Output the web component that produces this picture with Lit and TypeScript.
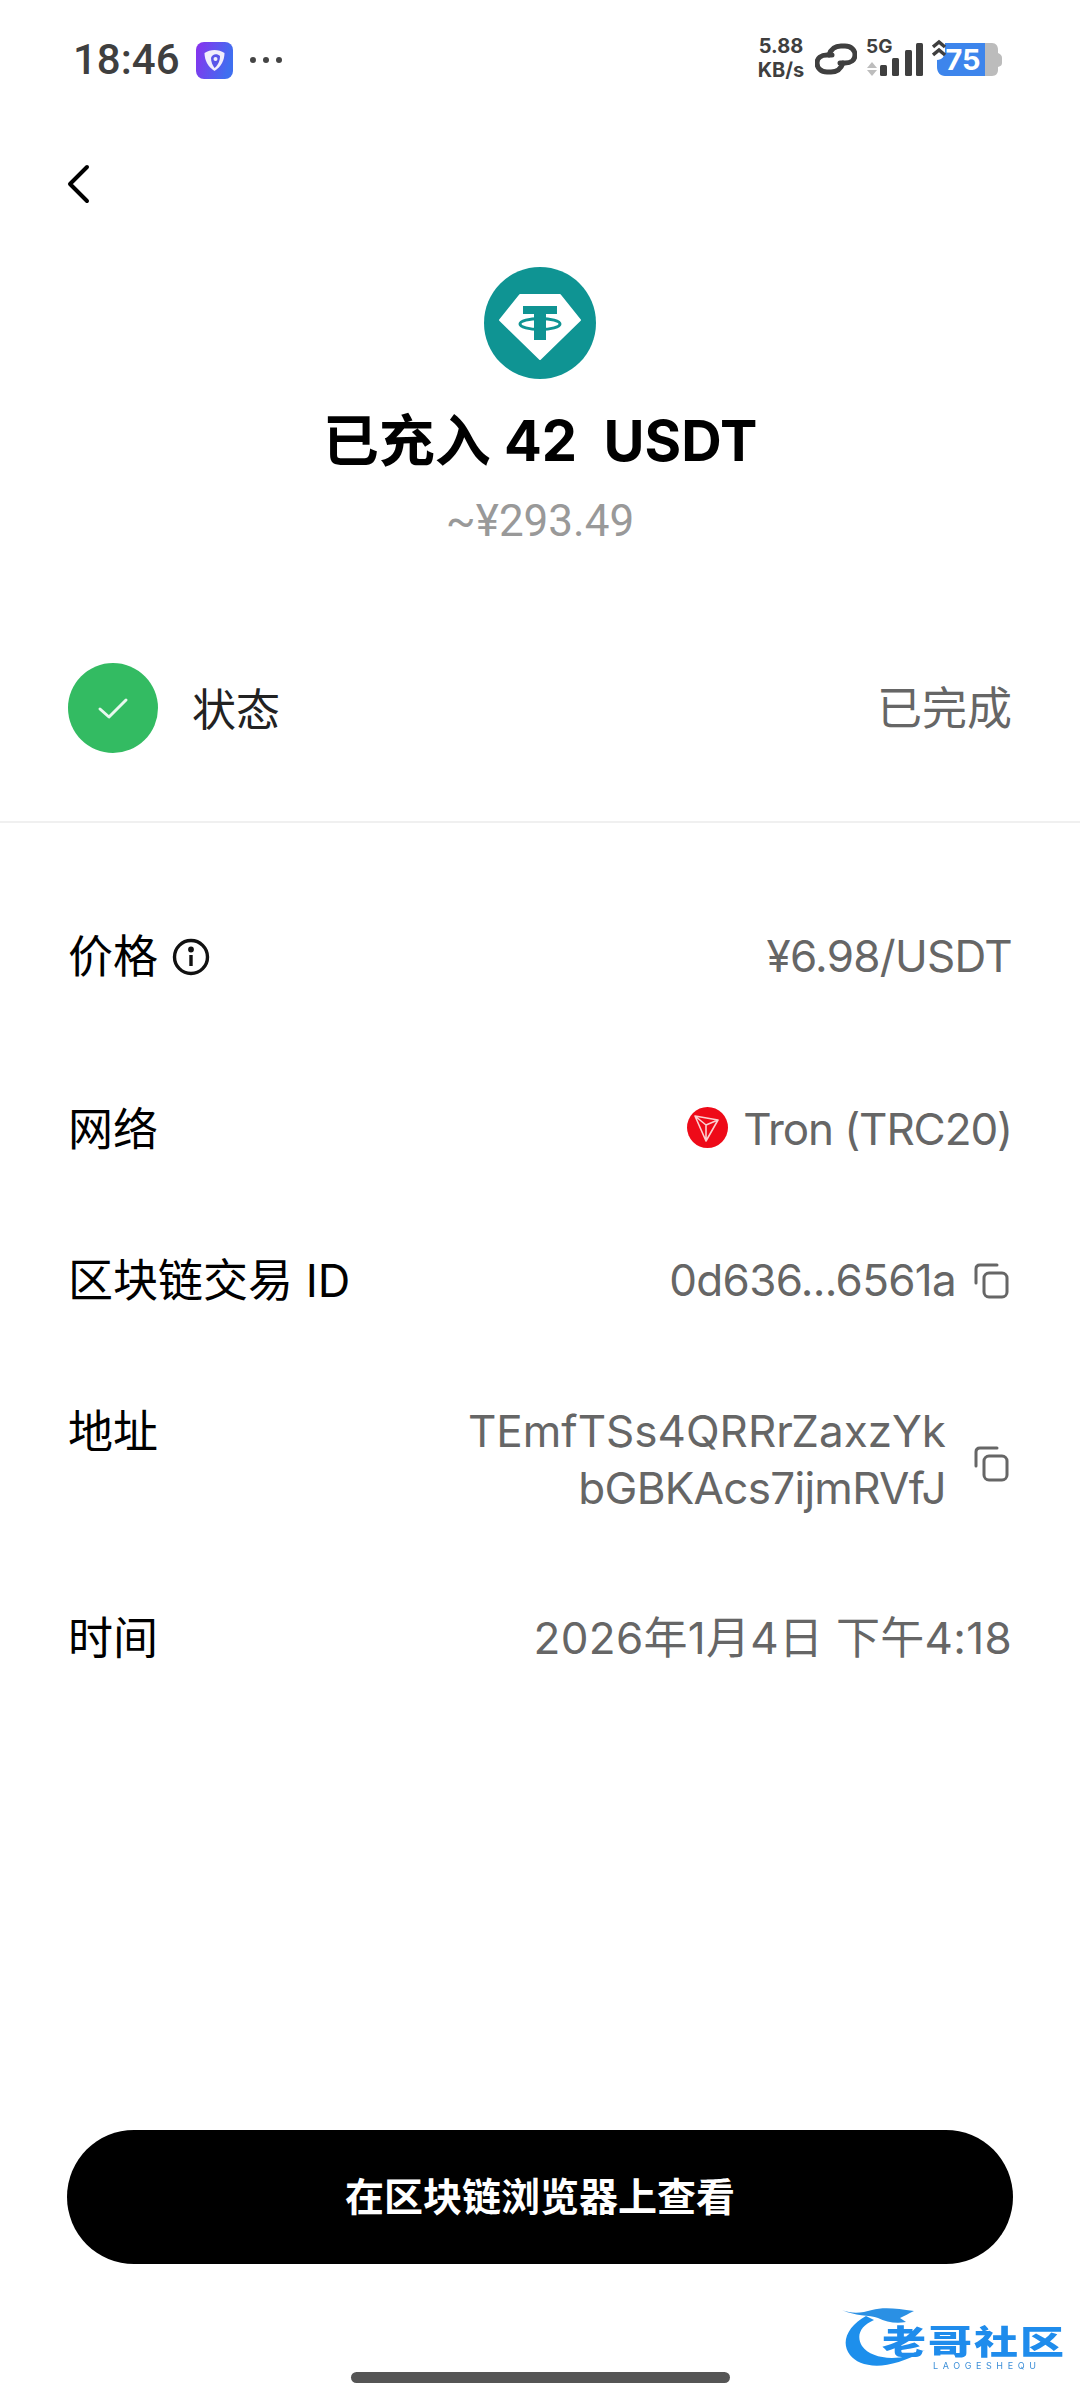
import { LitElement, css, html } from 'lit';
import { customElement } from 'lit/decorators.js';

@customElement('app-root')
export class AppRoot extends LitElement {
  static styles = css`
    :host {
      display: block;
      position: relative;
      width: 1080px;
      height: 2400px;
      background: #fff;
      overflow: hidden;
      font-family: "Inter", "Noto Sans CJK SC", sans-serif;
      color: #000;
    }

    .status {
      height: 120px;
      display: flex;
      align-items: center;
      justify-content: space-between;
      padding: 0 78px 0 73px;
      box-sizing: border-box;
    }
    .status-left, .status-right { display: flex; align-items: center; }
    .clock { font: 500 42px/1 "Roboto", sans-serif; color: #3f3f3f; }
    .app-icon { margin-left: 16px; width: 37px; height: 37px; }
    .dots { margin-left: 16px; width: 34px; height: 8px; }
    .speed {
      font: 700 20px/24px "Inter", sans-serif;
      color: #3f3f3f;
      text-align: center;
      width: 48px;
      margin-top: -4px;
    }
    .link { margin-left: 10px; width: 42px; height: 46px; }
    .signal { margin-left: 9px; width: 58px; height: 54px; }
    .battery { margin-left: 8px; width: 70px; height: 46px; }

    .nav { height: 97px; padding-left: 67px; display: flex; align-items: flex-start; }
    .back { margin-top: 44px; width: 24px; height: 40px; }

    .head { display: flex; flex-direction: column; align-items: center; }
    .token { width: 112px; height: 112px; margin-top: 50px; }
    .title {
      margin-top: 28px;
      font-size: 56px;
      line-height: 68px;
      font-weight: 700;
      white-space: pre;
    }
    .fiat { margin-top: 20px; font: 400 44px/52px "Roboto", sans-serif; color: #999; }

    .state {
      margin-top: 116px;
      height: 90px;
      padding: 0 68px;
      display: flex;
      align-items: center;
    }
    .check { width: 90px; height: 90px; }
    .state-label { margin-left: 34px; margin-top: -2px; font-size: 44px; color: #222; flex: 1; }
    .value { font-size: 44px; line-height: 57px; color: #666; white-space: nowrap; }
    .state .value { font-size: 45px; }
    .divider { margin-top: 68px; height: 2px; background: #f0f0f0; }

    .rows {
      padding: 105px 68px 0 68px;
      display: flex;
      flex-direction: column;
    }
    .row { display: flex; justify-content: space-between; align-items: flex-start; }
    .label {
      font-size: 45px;
      line-height: 57px;
      color: #000;
      display: flex;
      align-items: center;
    }
    .right { display: flex; align-items: center; }
    .info { margin-left: 14px; width: 38px; height: 38px; }
    .tron { width: 41px; height: 41px; margin-right: 15px; margin-top: -4px; }
    .copy { margin-left: 18px; margin-right: 2px; width: 36px; height: 38px; display: block; }
    .address { text-align: right; }
    .addr-copy { margin-left: 10px; margin-top: 8px; }
    .tight { letter-spacing: -0.7px; }
    .tighter { letter-spacing: -1.1px; }
    .gap-116 { margin-top: 116px; }
    .gap-94 { margin-top: 94px; }
    .gap-time { margin-top: 93px; }
    .date { letter-spacing: 0.3px; }

    .cta {
      position: absolute;
      left: 67px;
      top: 2130px;
      width: 946px;
      height: 134px;
      padding-bottom: 6px;
      box-sizing: border-box;
      border-radius: 67px;
      background: #000;
      color: #fff;
      display: flex;
      align-items: center;
      justify-content: center;
      font-size: 39px;
      font-weight: 700;
    }
    .home {
      position: absolute;
      left: 351px;
      top: 2372px;
      width: 379px;
      height: 11px;
      border-radius: 6px;
      background: #555;
    }

    .mark { position: absolute; left: 838px; top: 2300px; width: 232px; height: 84px; filter: blur(0.7px); }
    .mark svg { position: absolute; left: 0; top: 0; width: 120px; height: 84px; }
    .mark-cn {
      position: absolute;
      left: 44px;
      top: 23px;
      font-size: 44px;
      line-height: 38px;
      font-weight: 900;
      letter-spacing: 2px;
      white-space: pre;
      transform: scaleY(0.76);
      color: #1f8cec;
    }
    .mark-en {
      position: absolute;
      left: 95px;
      top: 60px;
      font-size: 9px;
      line-height: 11px;
      letter-spacing: 4.6px;
      color: #3d8fd8;
    }
  `;

  render() {
    return html`
      <div class="status">
        <div class="status-left">
          <span class="clock">18:46</span>
          <svg class="app-icon" viewBox="0 0 37 37">
            <defs>
              <linearGradient id="ai" x1="0" y1="0" x2="1" y2="0.3">
                <stop offset="0" stop-color="#8a30ee" />
                <stop offset="1" stop-color="#3f6ff0" />
              </linearGradient>
            </defs>
            <rect width="37" height="37" rx="8" fill="url(#ai)" />
            <path d="M18.500 8 C22 8 25.500 9 28.500 11 C28.500 18 25 25 18.500 29 C12 25 8.500 18 8.500 11 C11.500 9 15 8 18.500 8Z" fill="#f2eefc" />
            <path d="M15 16 C16 12 21 11 24 14 C24 20 21 24 18.500 26 C16.500 23 15 20 15 16Z" fill="#5a55e8" />
            <circle cx="19.500" cy="17" r="2" fill="#f2eefc" />
          </svg>
          <svg class="dots" viewBox="0 0 34 8" fill="#444">
            <circle cx="4" cy="4" r="3" /><circle cx="17" cy="4" r="3" /><circle cx="30" cy="4" r="3" />
          </svg>
        </div>
        <div class="status-right">
          <div class="speed">5.88<br />KB/s</div>
          <svg class="link" viewBox="0 0 42 46" fill="none" stroke="#3f3f3f" stroke-width="5" stroke-linecap="round">
            <path d="M14 18 C16 12 20 9 26 9 H30 C36 9 40 13 40 18 C40 23 36 26 30 26 H25" />
            <path d="M28 26 C26 32 22 35 16 35 H12 C6 35 2 31 2 26 C2 21 6 18 12 18 H17" />
          </svg>
          <svg class="signal" viewBox="0 -4 58 54">
            <text x="0" y="16" font-family="Inter, sans-serif" font-size="19" font-weight="700" fill="#3f3f3f">5G</text>
            <path d="M6 25 L11 31 H1Z" fill="#bdbdbd" />
            <path d="M1 33 H11 L6 39Z" fill="#bdbdbd" />
            <g fill="#3f3f3f">
              <rect x="14" y="28" width="7" height="11" rx="1.500" />
              <rect x="26" y="21" width="7" height="18" rx="1.500" />
              <rect x="39" y="13" width="7" height="26" rx="1.500" />
              <rect x="50" y="6" width="7" height="33" rx="1.500" />
            </g>
          </svg>
          <svg class="battery" viewBox="0 0 70 46">
            <path d="M53 6 H60 C64 6 66 9 66 13 V16 C69 17 70 19 70 21 V26 C70 28 69 29 66 30 V33 C66 36 64 39 60 39 H53Z" fill="#bcbcbc" />
            <path d="M13 6 H53 V39 H13 C8 39 5 35 5 30 V23 C10 23 13 19 13 14Z" fill="#3d85ec" />
            <path d="M1 10 L7 5 L13 10 M1 18 L7 13 L13 18" fill="none" stroke="#3f3f3f" stroke-width="3.500" />
            <text x="31" y="33" text-anchor="middle" font-family="Inter, sans-serif" font-size="29" font-weight="700" fill="#fff">75</text>
          </svg>
        </div>
      </div>

      <div class="nav">
        <svg class="back" viewBox="0 0 24 40" fill="none" stroke="#000" stroke-width="4" stroke-linecap="round" stroke-linejoin="round">
          <path d="M20 3 L3 20 L20 37" />
        </svg>
      </div>

      <div class="head">
        <svg class="token" viewBox="0 0 112 112">
          <circle cx="56" cy="56" r="56" fill="#0f9493" />
          <path d="M36 28 H76 L96 53 L56 92 L16 53Z" fill="#fff" stroke="#fff" stroke-width="2" stroke-linejoin="round" />
          <path d="M39 39 H73 V47 H62 V73 H50 V47 H39Z" fill="#0f9493" />
          <ellipse cx="56" cy="57" rx="20" ry="5.500" fill="none" stroke="#0f9493" stroke-width="3" />
        </svg>
        <div class="title">已充入 42  USDT</div>
        <div class="fiat">~¥293.49</div>
      </div>

      <div class="state">
        <svg class="check" viewBox="0 0 90 90">
          <circle cx="45" cy="45" r="45" fill="#33bb62" />
          <path d="M32 46 L41 54 L58 37" fill="none" stroke="#e8f8ee" stroke-width="3" stroke-linecap="round" stroke-linejoin="round" />
        </svg>
        <span class="state-label">状态</span>
        <span class="value">已完成</span>
      </div>
      <div class="divider"></div>

      <div class="rows">
        <div class="row">
          <span class="label">价格
            <svg class="info" viewBox="0 0 38 38" fill="none" stroke="#111" stroke-width="3.400">
              <circle cx="19" cy="19" r="16.500" />
              <path d="M19 17 V28" />
              <circle cx="19" cy="11.500" r="1.200" fill="#111" />
            </svg>
          </span>
          <span class="value tight">¥6.98/USDT</span>
        </div>
        <div class="row gap-116">
          <span class="label">网络</span>
          <span class="value right tighter">
            <svg class="tron" viewBox="0 0 41 41">
              <circle cx="20.500" cy="20.500" r="20.500" fill="#ee0a18" />
              <path d="M8 9 L31 13 L19 34Z M8 9 L19 18 L31 13 M19 18 L19 34" fill="none" stroke="#fbd0d0" stroke-width="1.600" stroke-linejoin="round" />
            </svg>Tron (TRC20)
          </span>
        </div>
        <div class="row gap-94">
          <span class="label">区块链交易 ID</span>
          <span class="value right tight">0d636...6561a${this.copyIcon()}</span>
        </div>
        <div class="row gap-94">
          <span class="label">地址</span>
          <span class="right">
            <span class="value address">TEmfTSs4QRRrZaxzYk<br /><span class="tight">bGBKAcs7ijmRVfJ</span></span>
            <span class="addr-copy">${this.copyIcon()}</span>
          </span>
        </div>
        <div class="row gap-time">
          <span class="label">时间</span>
          <span class="value date">2026年1月4日 下午4:18</span>
        </div>
      </div>

      <div class="cta">在区块链浏览器上查看</div>

      <div class="mark">
        <svg viewBox="0 0 120 84">
          <path d="M28 16 C10 26 2 42 12 55 C22 68 50 72 87 50 C62 62 34 60 24 46 C18 36 22 26 36 20Z" fill="#1d8fec" />
          <path d="M4 10 C14 14 24 13 34 10 C44 7 58 8 76 11 C70 14 66 16 62 18 L68 22 C58 24 48 22 40 18 C32 15 16 16 4 10Z" fill="#2a90e4" />
        </svg>
        <span class="mark-cn">老哥社区</span>
        <span class="mark-en">LAOGESHEQU</span>
      </div>

      <div class="home"></div>
    `;
  }

  copyIcon() {
    return html`
      <svg class="copy" viewBox="0 0 36 38" fill="none" stroke="#666" stroke-width="3" stroke-linejoin="round" stroke-linecap="round">
        <path d="M23 3 H6 C3.500 3 2 4.500 2 7 V21" />
        <rect x="10" y="11" width="23" height="24" rx="5" />
      </svg>
    `;
  }
}
